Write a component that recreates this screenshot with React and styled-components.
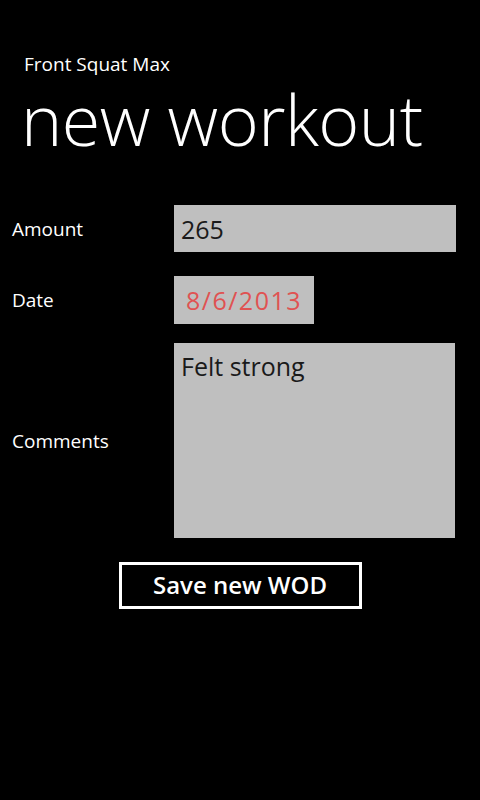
import React from "react";
import styled, { createGlobalStyle } from "styled-components";

const GlobalStyle = createGlobalStyle`
	html, body {
		margin: 0;
		padding: 0;
		background: #000;
	}
	body {
		font-family: "Open Sans", "Noto Sans", sans-serif;
		color: #fff;
	}
`;

const Page = styled.div`
	width: 480px;
	height: 800px;
	background: #000;
	display: flex;
	flex-direction: column;
`;

const Header = styled.header`
	padding: 52px 0 0 24px;
`;

const AppName = styled.div`
	font-size: 19px;
	line-height: 24px;
	color: #fff;
`;

const PageTitle = styled.h1`
	margin: 0;
	font-size: 70px;
	font-weight: 300;
	line-height: 86px;
	letter-spacing: -0.5px;
	margin-left: -3px;
`;

const Form = styled.div`
	display: flex;
	flex-direction: column;
	padding: 43px 24px 0 12px;
`;

const Row = styled.div`
	display: flex;
	align-items: center;
	margin-top: ${(props) => props.$gap || 0}px;
`;

const Label = styled.label`
	width: 162px;
	flex: none;
	font-size: 19px;
	color: #fff;
`;

const Field = styled.div`
	background: #bfbfbf;
	color: ${(props) => props.$color || "#1a1a1a"};
	font-size: 25px;
	letter-spacing: ${(props) => props.$spacing || 0}px;
	box-sizing: border-box;
	width: ${(props) => props.$width || "282px"};
	height: ${(props) => props.$height || "47px"};
	padding: ${(props) => (props.$multi ? "6px 7px" : "0 7px")};
	display: flex;
	align-items: ${(props) => (props.$multi ? "flex-start" : "center")};
	justify-content: ${(props) => (props.$center ? "center" : "flex-start")};
`;

const ButtonRow = styled.div`
	display: flex;
	justify-content: center;
	padding-top: 24px;
`;

const SaveButton = styled.button`
	width: 243px;
	height: 47px;
	box-sizing: border-box;
	background: transparent;
	border: 3px solid #fff;
	color: #fff;
	font-family: "Open Sans", "Noto Sans", sans-serif;
	font-size: 24px;
	font-weight: 600;
	padding: 0 0 2px;
`;

export default function App() {
	return (
		<Page>
			<GlobalStyle />
			<Header>
				<AppName>Front Squat Max</AppName>
				<PageTitle>new workout</PageTitle>
			</Header>
			<Form>
				<Row>
					<Label>Amount</Label>
					<Field>265</Field>
				</Row>
				<Row $gap={24}>
					<Label>Date</Label>
					<Field
						$width="140px"
						$height="48px"
						$color="#e05252"
						$spacing={1.5}
						$center
					>
						8/6/2013
					</Field>
				</Row>
				<Row $gap={19}>
					<Label>Comments</Label>
					<Field $width="281px" $height="195px" $multi>
						Felt strong
					</Field>
				</Row>
			</Form>
			<ButtonRow>
				<SaveButton>Save new WOD</SaveButton>
			</ButtonRow>
		</Page>
	);
}
